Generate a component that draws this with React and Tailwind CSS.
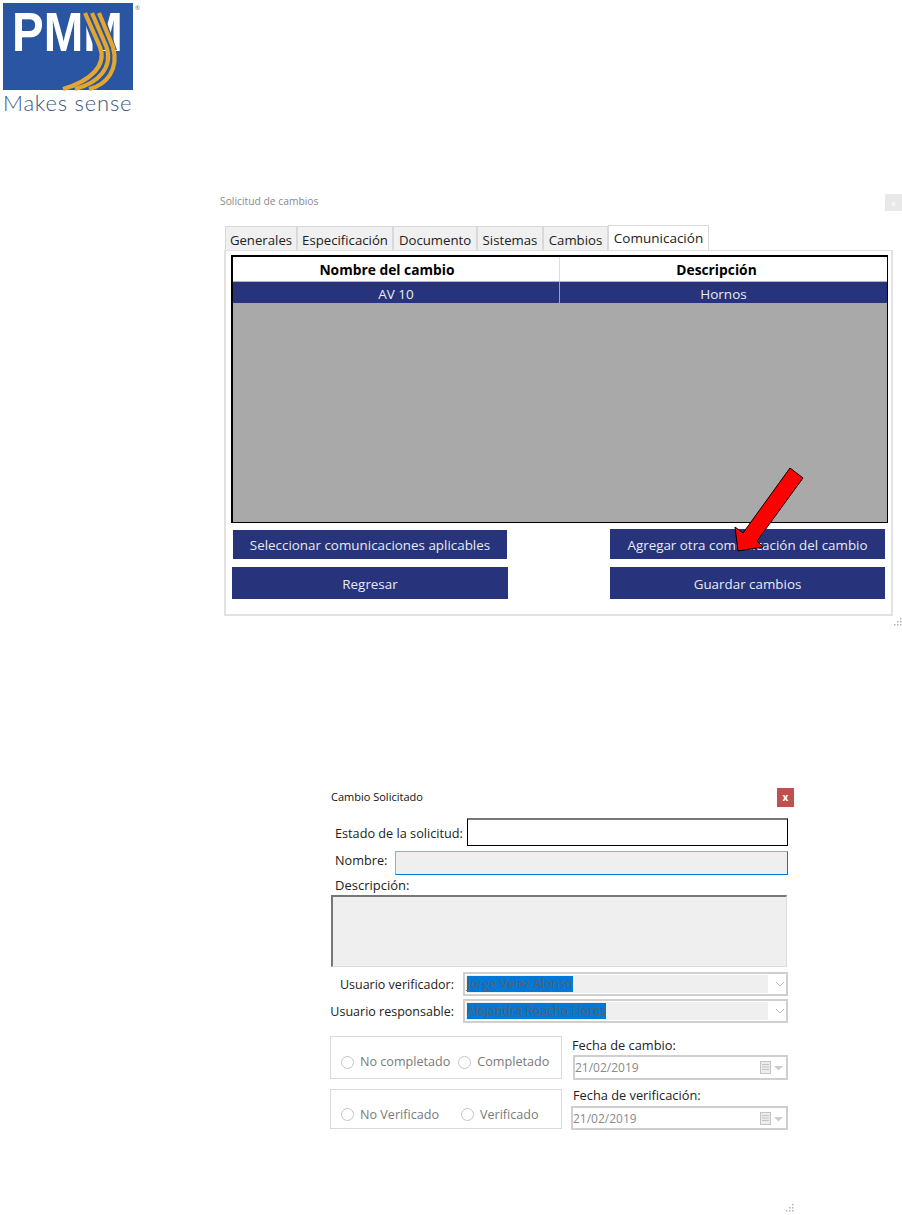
const font = "font-['Open_Sans','Liberation_Sans',sans-serif]";

const Grip = () => (
    <svg width="8" height="8" viewBox="0 0 8 8" fill="#b5b5b5">
        <rect x="6" y="0" width="1.5" height="1.5" />
        <rect x="3" y="3" width="1.5" height="1.5" />
        <rect x="6" y="3" width="1.5" height="1.5" />
        <rect x="0" y="6" width="1.5" height="1.5" />
        <rect x="3" y="6" width="1.5" height="1.5" />
        <rect x="6" y="6" width="1.5" height="1.5" />
    </svg>
);

const Logo = () => (
    <div className="relative w-[140px] h-[114px]">
        <svg className="ml-[3px] mt-[3px] overflow-visible" width="130" height="87" viewBox="0 0 130 87">
            <rect width="130" height="87" fill="#2a55a2" />
            <text transform="translate(9,48) scale(0.95,1.1)" fontFamily="Liberation Sans" fontWeight="700" fontSize="50" fill="#fff">PMM</text>
            <polygon points="78,9 100,9 114,47 92,47" fill="#2a55a2" />
            <g fill="none" stroke="#e3a62f" strokeWidth="4.2">
                <path d="M82 10 L97 44 C104 62 88 78 60 86" />
                <path d="M89 10 L103.500 44 C110 64 96 80 72 86" />
                <path d="M96 10 L110 44 C116 66 104 82 86 86" />
            </g>
        </svg>
        <div className="absolute left-[135px] top-[2px] text-[6px] leading-none text-gray-500">®</div>
        <div className="ml-[3px] w-[130px] text-[22px] leading-[26px] text-[#3a5580] font-['Lato',sans-serif] font-light tracking-[0.8px] whitespace-nowrap">Makes sense</div>
    </div>
);

const tabs = [
    ['Generales', 'w-[72px]'],
    ['Especificación', 'w-[96px]'],
    ['Documento', 'w-[84px]'],
    ['Sistemas', 'w-[66px]'],
    ['Cambios', 'w-[65px]'],
];

const BlueButton = ({ label, className }) => (
    <button className={`bg-[#27337a] text-[#e8ebf5] text-[13.4px] flex items-center justify-center pt-[2px] ${className}`}>{label}</button>
);

const SolicitudWindow = () => (
    <div className="ml-[220px] w-[682px]">
        <div className="flex justify-between h-[17px]">
            <span className="text-[10.3px] leading-[15px] text-[#8a8a8a]">Solicitud de cambios</span>
            <div className="w-[17px] h-[17px] bg-[#e8e8e8] flex items-center justify-center text-[8px] text-white">x</div>
        </div>
        <div className="ml-[5px] mt-[14px] flex items-end h-[25px]">
            {tabs.map(([label, width]) => (
                <div key={label} className={`${width} h-[24px] bg-[#f0f0f0] border border-b-0 border-[#d9d9d9] text-[13.2px] text-[#222] flex items-center justify-center whitespace-nowrap pt-[4px]`}>{label}</div>
            ))}
            <div className="w-[101px] h-[25px] bg-white border border-b-0 border-[#d9d9d9] text-[13.5px] text-[#222] flex items-center justify-center">Comunicación</div>
        </div>
        <div className="ml-[4px] w-[669px] h-[366px] border-2 border-t border-[#e2e2e2] pl-[5px] pt-[4px]">
            <div className="w-[657px] h-[268px] border border-t-2 border-l-2 border-black bg-[#a9a9a9] flex flex-col">
                <div className="flex h-[25px] bg-white border-b border-[#b5b5b5] text-[13.8px] font-bold text-black">
                    <div className="w-[327px] flex items-center justify-center border-r border-[#dddddd] pr-[18px] pt-[2px]">Nombre del cambio</div>
                    <div className="flex-1 flex items-center justify-center pr-[14px] pt-[2px]">Descripción</div>
                </div>
                <div className="flex h-[21px] bg-[#27337a] text-[13.5px] text-[#e8ebf5]">
                    <div className="w-[327px] flex items-center justify-center border-r border-[#9aa0bd] pt-[3px]">AV 10</div>
                    <div className="flex-1 flex items-center justify-center pt-[3px]">Hornos</div>
                </div>
            </div>
            <div className="mt-[6px] flex justify-between w-[653px] ml-[1px]">
                <BlueButton label="Seleccionar comunicaciones aplicables" className="w-[274px] h-[29px] ml-[1px] mt-[1px]" />
                <BlueButton label="Agregar otra comunicación del cambio" className="w-[275px] h-[30px]" />
            </div>
            <div className="mt-[8px] flex justify-between w-[653px] ml-[1px]">
                <BlueButton label="Regresar" className="w-[276px] h-[32px]" />
                <BlueButton label="Guardar cambios" className="w-[275px] h-[32px]" />
            </div>
        </div>
        <div className="flex justify-end h-[8px] mt-[2px]"><Grip /></div>
    </div>
);

const Selected = ({ label, value }) => (
    <div className="flex items-center h-[24px]">
        <div className="w-[124px] text-right text-[12.5px] text-[#222] whitespace-nowrap pt-[2px]">{label}</div>
        <div className="ml-[9px] w-[325px] h-[24px] border-2 border-[#cfcfcf] p-[1px] flex items-center">
            <div className="w-[302px] h-[18px] bg-[#efefef] flex items-center">
                <span className="h-[16px] ml-[1px] bg-[#0078d7] text-[12.4px] leading-[16px] text-[#59606b] whitespace-nowrap">{value}</span>
            </div>
            <svg className="ml-[7px]" width="10" height="6" viewBox="0 0 10 6" fill="none" stroke="#bdbdbd">
                <path d="M1 1 L5 5 L9 1" />
            </svg>
        </div>
    </div>
);

const Radio = ({ label, className }) => (
    <div className={`flex items-center gap-[6px] text-[12.6px] text-[#7a7a7a] whitespace-nowrap ${className}`}>
        <span className="w-[13px] h-[13px] rounded-full border border-[#c4c4c4]" />
        {label}
    </div>
);

const DateBox = ({ className }) => (
    <div className={`border-2 border-[#cfcfcf] flex items-center justify-between pr-[2px] text-[12px] text-[#8a8a8a] ${className}`}>
        <span className="pt-[1px]">21/02/2019</span>
        <svg width="24" height="13" viewBox="0 0 24 13">
            <rect x="0.500" y="0.500" width="10" height="12" fill="#ececec" stroke="#c4c4c4" />
            <path d="M2 3.500h7M2 6h7M2 8.500h7" stroke="#c4c4c4" />
            <path d="M14 5h9l-4.500 4.500z" fill="#cccccc" />
        </svg>
    </div>
);

const CambioWindow = () => (
    <div className="ml-[330px] mt-[163px] w-[465px]">
        <div className="flex justify-between items-start h-[20px]">
            <span className="ml-[1px] text-[11px] leading-[15px] text-[#111]">Cambio Solicitado</span>
            <div className="w-[17px] h-[19px] -mt-[1px] -translate-x-[1px] bg-[#c0504d] flex items-center justify-center text-[10px] font-bold text-white">x</div>
        </div>
        <div className="mt-[9px] flex items-center h-[28px] pl-[5px]">
            <span className="w-[132px] text-[12.7px] text-[#222] whitespace-nowrap pt-[3px]">Estado de la solicitud:</span>
            <div className="w-[321px] h-[28px] border border-black border-t-2 border-t-[#777] bg-white" />
        </div>
        <div className="mt-[5px] flex items-start h-[24px] pl-[5px]">
            <span className="w-[60px] text-[12.7px] leading-[18px] text-[#222]">Nombre:</span>
            <div className="w-[393px] h-[24px] border border-[#0078d7] border-t-[#7db4e4] border-l-[#7db4e4] bg-[#efefef]" />
        </div>
        <div className="pl-[5px] h-[20px] text-[13px] leading-[20px] text-[#222]">Descripción:</div>
        <div className="ml-[1px] w-[456px] h-[72px] bg-[#efefef] border border-[#dcdcdc] border-t-2 border-l-2 border-t-[#777] border-l-[#777]" />
        <div className="mt-[5px]"><Selected label="Usuario verificador:" value="Jorge Velez Alonso" /></div>
        <div className="mt-[3px]"><Selected label="Usuario responsable:" value="Alejandra Roacho Flores" /></div>
        <div className="mt-[13px] flex">
            <div className="w-[232px] h-[43px] border border-[#d9d9d9] pl-[10px] pt-[10px] flex items-center">
                <Radio label="No completado" />
                <Radio label="Completado" className="ml-[8px]" />
            </div>
            <div className="ml-[10px] w-[216px]">
                <div className="h-[19px] text-[12.8px] leading-[18px] text-[#222]">Fecha de cambio:</div>
                <DateBox className="ml-[1px] w-[215px] h-[25px]" />
            </div>
        </div>
        <div className="mt-[8px] flex">
            <div className="w-[232px] h-[40px] mt-[1px] border border-[#d9d9d9] pl-[10px] pt-[12px] flex items-center">
                <Radio label="No Verificado" />
                <Radio label="Verificado" className="ml-[22px]" />
            </div>
            <div className="ml-[9px] w-[217px]">
                <div className="ml-[2px] h-[18px] text-[12.8px] leading-[15px] text-[#222]">Fecha de verificación:</div>
                <DateBox className="w-[217px] h-[24px]" />
            </div>
        </div>
        <div className="flex justify-end h-[8px] mt-[74px] pr-[1px]"><Grip /></div>
    </div>
);

const App = () => {
    return (
        <div className={`relative w-[902px] h-[1215px] bg-white overflow-hidden ${font}`}>
            <Logo />
            <div className="mt-[77px]">
                <SolicitudWindow />
            </div>
            <CambioWindow />
            <svg className="absolute left-[730px] top-[464px]" width="80" height="92" viewBox="0 0 80 92">
                <polygon points="60,4 73,14 27,77 33,83 8,87 5,63 13,69" fill="#ff0000" stroke="#000" strokeWidth="1" />
            </svg>
        </div>
    );
};

export default App;
